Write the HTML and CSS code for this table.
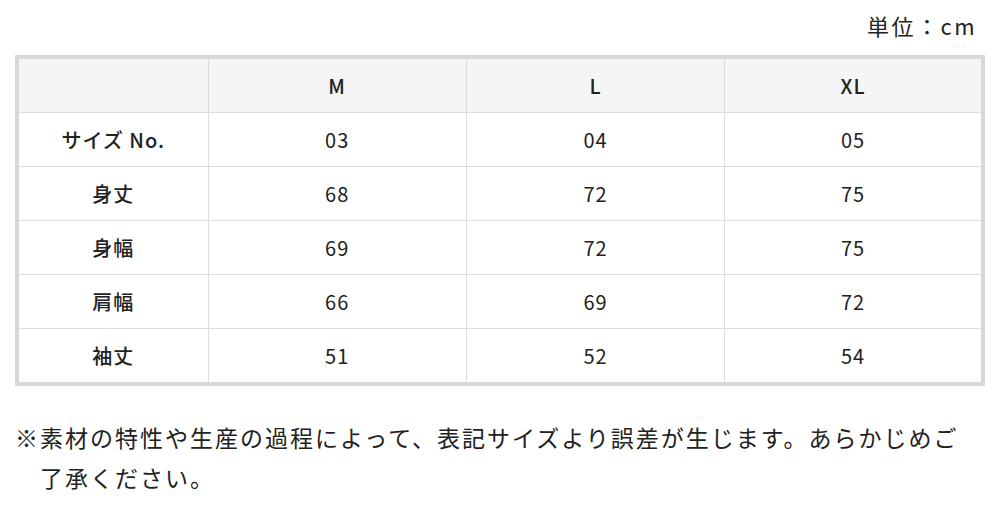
FILE: index.html
```html
<!DOCTYPE html>
<html lang="ja">
<head>
<meta charset="utf-8">
<link rel="stylesheet" href="styles.css">
</head>
<body>
<div class="page">
  <div class="unit">単位：cm</div>
  <table class="size-table">
    <colgroup>
      <col class="col-label">
      <col class="col-size">
      <col class="col-size">
      <col class="col-size">
    </colgroup>
    <thead>
      <tr><th></th><th>M</th><th>L</th><th>XL</th></tr>
    </thead>
    <tbody>
      <tr><th>サイズ No.</th><td>03</td><td>04</td><td>05</td></tr>
      <tr><th>身丈</th><td>68</td><td>72</td><td>75</td></tr>
      <tr><th>身幅</th><td>69</td><td>72</td><td>75</td></tr>
      <tr><th>肩幅</th><td>66</td><td>69</td><td>72</td></tr>
      <tr><th>袖丈</th><td>51</td><td>52</td><td>54</td></tr>
    </tbody>
  </table>
  <p class="note">※素材の特性や生産の過程によって、表記サイズより誤差が生じます。あらかじめご了承ください。</p>
</div>
</body>
</html>
```

FILE: styles.css
```css
html, body {
  margin: 0;
  padding: 0;
  background: #fff;
}
body {
  font-family: "Noto Sans CJK JP", "Noto Sans", sans-serif;
  color: #222;
}
.page {
  padding: 0 15px;
}
.unit {
  height: 55px;
  box-sizing: border-box;
  padding: 0 8px 6px 0;
  display: flex;
  align-items: center;
  justify-content: flex-end;
  font-size: 22px;
  letter-spacing: 2.5px;
}
.size-table {
  width: 100%;
  border-collapse: collapse;
  table-layout: fixed;
  border: 4px solid #d8d8d8;
}
.col-label { width: 191px; }
.size-table th,
.size-table td {
  height: 53px;
  border: 1px solid #dcdcdc;
  text-align: center;
  vertical-align: middle;
  font-size: 20px;
  letter-spacing: 1px;
  padding: 0;
}
.size-table th {
  font-weight: 500;
}
.size-table td {
  font-weight: 400;
}
.size-table thead th {
  background: #f5f5f5;
}
.note {
  margin: 31px 12px 0 0;
  font-size: 23px;
  letter-spacing: 2px;
  line-height: 40px;
  padding-left: 25px;
  text-indent: -25px;
}
```
